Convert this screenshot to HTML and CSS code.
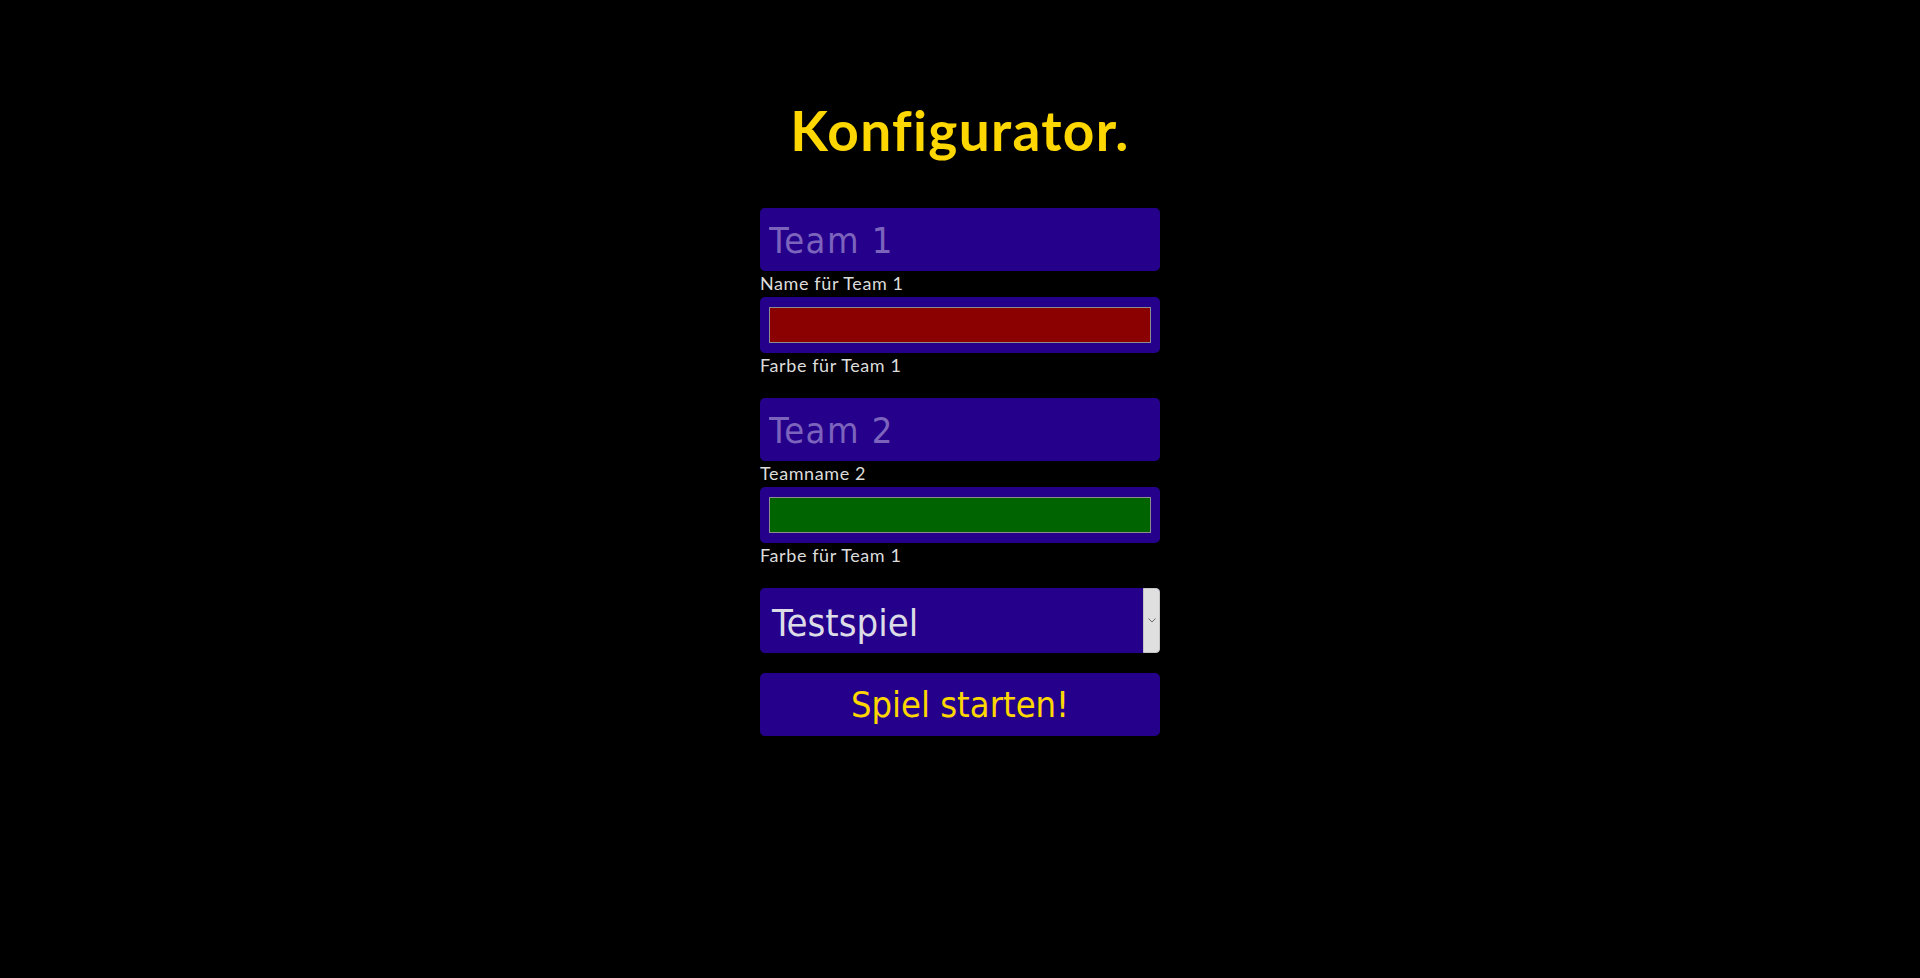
FILE: index.html
```html
<!DOCTYPE html>
<html lang="de">
<head>
<meta charset="utf-8">
<title>Konfigurator</title>
<link rel="stylesheet" href="styles.css">
</head>
<body>
<main class="page">
  <h1 class="title">Konfigurator.</h1>
  <form class="form">
    <div class="group">
      <input class="text-input" type="text" placeholder="Team 1">
      <label class="label">Name für Team 1</label>
      <div class="color-box"><div class="swatch swatch-red"></div></div>
      <label class="label">Farbe für Team 1</label>
    </div>
    <div class="group">
      <input class="text-input" type="text" placeholder="Team 2">
      <label class="label">Teamname 2</label>
      <div class="color-box"><div class="swatch swatch-green"></div></div>
      <label class="label">Farbe für Team 1</label>
    </div>
    <div class="select">
      <span class="select-value">Testspiel</span>
      <span class="select-arrow">
        <svg width="8" height="5" viewBox="0 0 8 5"><path d="M0.5 0.5 L4 4 L7.5 0.5" fill="none" stroke="#6a6a6a" stroke-width="1"/></svg>
      </span>
    </div>
    <button class="start" type="button">Spiel starten!</button>
  </form>
</main>
</body>
</html>
```

FILE: styles.css
```css
html, body {
  margin: 0;
  padding: 0;
  background: #000;
  height: 100%;
}

body {
  font-family: Lato, "Noto Sans", sans-serif;
  color: #dcdcdc;
}

.page {
  display: flex;
  flex-direction: column;
  align-items: center;
  padding-top: 98px;
}

.title {
  margin: 0 0 46px 0;
  font-family: Lato, "Noto Sans", sans-serif;
  font-weight: 700;
  font-size: 55px;
  line-height: 64px;
  color: #ffd700;
  letter-spacing: 1.3px;
}

.form {
  width: 400px;
  display: flex;
  flex-direction: column;
}

.group {
  display: flex;
  flex-direction: column;
  margin-bottom: 19px;
}

.text-input {
  box-sizing: border-box;
  width: 100%;
  height: 63px;
  margin: 0;
  border: none;
  border-radius: 5px;
  background: #25008b;
  padding: 2px 8px 0 9px;
  font-family: "DejaVu Sans Condensed", "DejaVu Sans", sans-serif;
  font-size: 36px;
  letter-spacing: 1.5px;
  color: #dcdcdc;
  outline: none;
}

.text-input::placeholder {
  color: #7c64bc;
  opacity: 1;
}

.label {
  display: block;
  font-size: 18px;
  line-height: 22px;
  padding: 1px 0 3px 0;
  color: #dcdcdc;
  letter-spacing: 0.6px;
}

.color-box {
  box-sizing: border-box;
  height: 56px;
  padding: 10px 9px;
  background: #25008b;
  border-radius: 5px;
}

.swatch {
  box-sizing: border-box;
  height: 36px;
  border: 1px solid #8c8c8c;
}

.swatch-red { background: #8b0000; }
.swatch-green { background: #006400; }

.select {
  box-sizing: border-box;
  height: 65px;
  display: flex;
  background: #25008b;
  border-radius: 5px;
  margin-bottom: 20px;
}

.select-value {
  flex: 1;
  display: flex;
  align-items: center;
  padding: 4px 0 0 12px;
  font-family: "DejaVu Sans Condensed", "DejaVu Sans", sans-serif;
  font-size: 38px;
  color: #dcdce6;
}

.select-arrow {
  box-sizing: border-box;
  width: 17px;
  display: flex;
  align-items: center;
  justify-content: center;
  background: #dfdfdf;
  border: 1px solid #c4c4c4;
  border-radius: 0 4px 4px 0;
}

.start {
  box-sizing: border-box;
  height: 63px;
  width: 100%;
  margin: 0;
  border: none;
  border-radius: 5px;
  background: #25008b;
  font-family: "DejaVu Sans Condensed", "DejaVu Sans", sans-serif;
  font-size: 36px;
  color: #ffd700;
  padding: 0;
}
```
